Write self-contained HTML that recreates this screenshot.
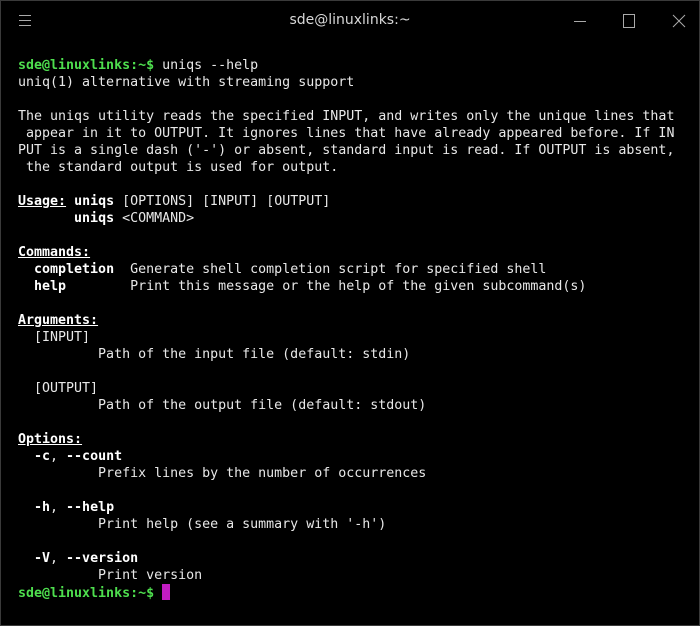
<!DOCTYPE html>
<html><head><style>
html,body{margin:0;padding:0;background:#000;}
body{width:700px;height:626px;position:relative;overflow:hidden;box-sizing:border-box;border:1px solid #3a3a3a;}
.title{position:absolute;top:11px;left:0;width:698px;text-align:center;color:#d8d8d8;font:14px "DejaVu Sans","Liberation Sans",sans-serif;}
pre{position:absolute;left:17px;top:56px;margin:0;font:13.3px/17px "DejaVu Sans Mono","Liberation Mono",monospace;color:#e8e8e8;}
b{font-weight:bold;color:#fff}
u{font-weight:bold;color:#fff}
.g{color:#4ede4e;font-weight:bold}
.cur{display:inline-block;width:8px;height:16px;background:#c21cc2;vertical-align:-3px;}
</style></head><body>
<svg width="700" height="40" style="position:absolute;left:0;top:0" fill="none" stroke="#aaa" stroke-width="1">
<path d="M18 14.5H30M18 19.5H30M18 24.5H30"/>
<path d="M573 20.5H585"/>
<rect x="622.5" y="13.5" width="11" height="13"/>
<path d="M672 14L684 26M684 14L672 26"/>
</svg>
<div class="title">sde@linuxlinks:~</div>
<pre><span class="g">sde@linuxlinks:~$</span> uniqs --help
uniq(1) alternative with streaming support

The uniqs utility reads the specified INPUT, and writes only the unique lines that
 appear in it to OUTPUT. It ignores lines that have already appeared before. If IN
PUT is a single dash ('-') or absent, standard input is read. If OUTPUT is absent,
 the standard output is used for output.

<u>Usage:</u> <b>uniqs</b> [OPTIONS] [INPUT] [OUTPUT]
       <b>uniqs</b> &lt;COMMAND&gt;

<u>Commands:</u>
  <b>completion</b>  Generate shell completion script for specified shell
  <b>help</b>        Print this message or the help of the given subcommand(s)

<u>Arguments:</u>
  [INPUT]
          Path of the input file (default: stdin)

  [OUTPUT]
          Path of the output file (default: stdout)

<u>Options:</u>
  <b>-c</b>, <b>--count</b>
          Prefix lines by the number of occurrences

  <b>-h</b>, <b>--help</b>
          Print help (see a summary with '-h')

  <b>-V</b>, <b>--version</b>
          Print version
<span class="g">sde@linuxlinks:~$</span> <span class="cur"></span></pre>
</body></html>
